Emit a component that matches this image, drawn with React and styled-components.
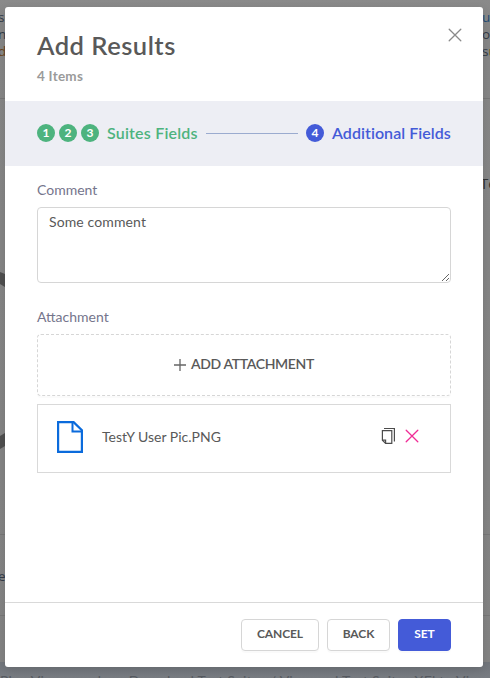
import React from 'react';
import styled, { createGlobalStyle } from 'styled-components';

const GlobalStyle = createGlobalStyle`
  * { box-sizing: border-box; }
  body {
    margin: 0;
    overflow: hidden;
    background: #868686;
    font-family: Lato, "Liberation Sans", sans-serif;
    color: #595959;
  }
`;

const Screen = styled.div`
  position: relative;
  width: 490px;
  height: 678px;
  overflow: hidden;
`;

const Page = styled.div`
  display: flex;
  flex-direction: column;
  height: 678px;
  background: linear-gradient(#8a8a8a, #868686 30px, #838383);
`;

const PageSection = styled.div`
  display: flex;
  flex-shrink: 0;
  justify-content: space-between;
  height: ${(p) => p.$height}px;
  padding-top: ${(p) => p.$top || 0}px;
  border-bottom: 1px solid #777;
  font: 13.5px/17px "Open Sans", sans-serif;
  color: #333b48;
`;

const Snippets = styled.div`
  width: 8px;
  margin-left: ${(p) => p.$shift || 0}px;
  white-space: nowrap;
`;

const Tint = styled.span`
  color: ${(p) => p.$color};
`;

const SideText = styled.div`
  position: absolute;
  left: ${(p) => p.$x}px;
  top: ${(p) => p.$y}px;
  font: 15px/20px "Open Sans", sans-serif;
  color: #333;
`;

const Arc = styled.svg`
  position: absolute;
  left: 0;
  top: 268px;
`;

const PageFooter = styled.div`
  flex: 1;
  background: linear-gradient(#71757b, #7d8187);
  margin-top: 46px;
  padding: 10px 0 0;
  font-size: 14px;
  line-height: 18px;
  letter-spacing: 0.25px;
  white-space: nowrap;
  color: #565a60;
`;

const Modal = styled.section`
  position: absolute;
  left: 5px;
  top: 7px;
  width: 478px;
  height: 660px;
  display: flex;
  flex-direction: column;
  overflow: hidden;
  background: #fff;
  border-radius: 3px;
`;

const Shadow = styled.div`
  position: absolute;
  left: 5px;
  top: 7px;
  width: 478px;
  height: 660px;
  border-radius: 3px;
  box-shadow: 0 3px 10px rgba(0, 0, 0, 0.12);
`;

const Header = styled.header`
  display: flex;
  justify-content: space-between;
  height: 94px;
  padding: 21px 21px 0 32px;
`;

const Title = styled.h1`
  margin: 1px 0 0;
  font-size: 25.5px;
  font-weight: 600;
  line-height: 32px;
  letter-spacing: 0.5px;
`;

const Subtitle = styled.div`
  margin-top: 5px;
  font-size: 13.5px;
  font-weight: 700;
  line-height: 20px;
  letter-spacing: 0.25px;
  color: #9a9a9a;
`;

const IconButton = styled.button`
  display: block;
  height: ${(p) => p.$size}px;
  padding: 0;
  border: 0;
  background: none;
`;

const Steps = styled.nav`
  display: flex;
  align-items: center;
  height: 65px;
  padding: 0 32px 1px;
  background: #edeef4;
`;

const Step = styled.div`
  display: flex;
  align-items: center;
  gap: 4px;
  color: ${(p) => p.$color};
`;

const StepNumber = styled.span`
  width: 18px;
  height: 18px;
  border-radius: 50%;
  background: ${(p) => p.$color};
  color: #fff;
  font-size: 12px;
  font-weight: 700;
  line-height: 18px;
  text-align: center;
`;

const StepName = styled.span`
  width: ${(p) => p.$width}px;
  margin-left: 4px;
  padding-bottom: 1px;
  font-size: 16px;
  font-weight: 600;
  line-height: 20px;
  letter-spacing: ${(p) => p.$spacing}px;
  white-space: nowrap;
`;

const StepLine = styled.div`
  flex: 1;
  height: 1px;
  margin: 1px 8px 0;
  background: #9babcf;
`;

const Body = styled.main`
  flex: 1;
  padding: 14px 32px 0;
`;

const Label = styled.label`
  display: block;
  height: 27px;
  font-size: 14px;
  line-height: 20px;
  color: #75758c;
`;

const TextArea = styled.textarea`
  display: block;
  width: 414px;
  height: 76px;
  margin-bottom: 24px;
  padding: 3px 11px 4px;
  border: 1px solid #d6d6d6;
  border-radius: 4px;
  outline: 0;
  resize: vertical;
  font: 400 14px/22px Lato, sans-serif;
  letter-spacing: 0.12px;
  color: #595959;
`;

const AddButton = styled.button`
  display: flex;
  align-items: center;
  justify-content: center;
  gap: 4px;
  width: 414px;
  height: 62px;
  padding: 0 1px 1px 0;
  border: 1px dashed #d6d6d6;
  border-radius: 4px;
  background: #fff;
  box-shadow: 0 2px 0 rgba(0, 0, 0, 0.016);
  font: 600 14px/20px Lato, sans-serif;
  letter-spacing: -0.36px;
  color: #595959;
`;

const AddText = styled.span`
  padding-bottom: 1px;
`;

const FileCard = styled.div`
  display: flex;
  align-items: center;
  height: 69px;
  margin-top: 8px;
  padding: 0 31px 3px 16px;
  border: 1px solid #d9d9d9;
`;

const FileName = styled.span`
  flex: 1;
  margin-left: 16px;
  font-size: 14px;
  line-height: 20px;
`;

const FileActions = styled.div`
  display: flex;
  align-items: center;
  gap: 9px;
  padding-bottom: 2px;
`;

const Footer = styled.footer`
  display: flex;
  justify-content: flex-end;
  gap: 8px;
  height: 65px;
  padding: 16px 32px;
  border-top: 1px solid #d9d9d9;
`;

const Button = styled.button`
  width: ${(p) => p.$width}px;
  height: 32px;
  padding: 0 0 2px;
  border: 1px solid ${(p) => (p.$primary ? '#445bd8' : '#d6d6d6')};
  border-radius: 4px;
  background: ${(p) => (p.$primary ? '#445bd8' : '#fff')};
  box-shadow: 0 2px 0 rgba(0, 0, 0, 0.02);
  font: 700 12px/20px Lato, sans-serif;
  letter-spacing: -0.1px;
  color: ${(p) => (p.$primary ? '#fff' : '#595959')};
`;

const GREEN = '#4db37e';
const BLUE = '#445bd8';

const CrossIcon = ({ size, color, inset, strokeWidth }) => (
  <svg display="block" width={size} height={size} viewBox={`0 0 ${size} ${size}`} fill="none" stroke={color} strokeWidth={strokeWidth} strokeLinecap="round">
    <path d={`M${inset} ${inset}L${size - inset} ${size - inset}M${size - inset} ${inset}L${inset} ${size - inset}`} />
  </svg>
);

const PlusIcon = () => (
  <svg width="14" height="14" viewBox="0 0 14 14" stroke="#666" strokeWidth="1.3">
    <path d="M7 1v12M1 7h12" />
  </svg>
);

const FileIcon = () => (
  <svg width="32" height="34" viewBox="0 0 32 34" fill="none" stroke="#0b6bdc" strokeWidth="2.2">
    <path d="M4.1 2.1H19.6L27.9 10.1V31.9H4.1Z" />
    <path d="M18.5 2V11.5H28" strokeWidth="2" />
  </svg>
);

const CopyIcon = () => (
  <svg display="block" width="16" height="18" viewBox="0 0 16 18" fill="none" stroke="#4c4c4c" strokeWidth="1.2">
    <path d="M4 1.5H14.4V14.6" />
    <path d="M2.4 3.7H11.8V16.4H5.6L2.4 13.2Z" />
    <path d="M2.4 13.2H5.6V16.4" />
  </svg>
);

const Background = () => (
  <Page>
    <PageSection $height={99} $top={9}>
      <Snippets $shift={-2}>sc<br />n<br /><Tint $color="#69451f">d</Tint><Tint $color="#254a72">a</Tint></Snippets>
      <Snippets><Tint $color="#244c76">u</Tint><Tint $color="#805018">s</Tint><br />o<Tint $color="#432b63">l</Tint><br />s<Tint $color="#76501e">u</Tint></Snippets>
    </PageSection>
    <PageSection $height={436} />
    <PageSection $height={81} $top={33}>
      <Snippets $shift={-2}>e</Snippets>
    </PageSection>
    <PageFooter>Plan View members Download Test Suites / View and Test Suites XEl to View</PageFooter>
  </Page>
);

export default function App() {
  return (
    <>
      <GlobalStyle />
      <Screen>
        <Background />
        <SideText $x={480} $y={173}>Te</SideText>
        <Arc width="5" height="190" viewBox="0 0 5 190" fill="#4f4f4f">
          <path d="M0 4L5 6V19L0 16Z" />
          <path d="M0 168L5 165V178L0 181Z" />
        </Arc>
        <Shadow />
        <Modal>
          <Header>
            <div>
              <Title>Add Results</Title>
              <Subtitle>4 Items</Subtitle>
            </div>
            <IconButton $size={14} aria-label="Close">
              <CrossIcon size={14} color="#8a8a8a" inset={1.2} strokeWidth={1.3} />
            </IconButton>
          </Header>
          <Steps>
            <Step $color={GREEN}>
              {[1, 2, 3].map((n) => (
                <StepNumber key={n} $color={GREEN}>{n}</StepNumber>
              ))}
              <StepName $width={91} $spacing={0.2}>Suites Fields</StepName>
            </Step>
            <StepLine />
            <Step $color={BLUE}>
              <StepNumber $color={BLUE}>4</StepNumber>
              <StepName $width={119} $spacing={0.05}>Additional Fields</StepName>
            </Step>
          </Steps>
          <Body>
            <Label>Comment</Label>
            <TextArea defaultValue="Some comment" spellCheck={false} />
            <Label>Attachment</Label>
            <AddButton><PlusIcon /><AddText>ADD ATTACHMENT</AddText></AddButton>
            <FileCard>
              <FileIcon />
              <FileName>TestY User Pic.PNG</FileName>
              <FileActions>
                <IconButton $size={18} aria-label="Copy"><CopyIcon /></IconButton>
                <IconButton $size={14} aria-label="Remove">
                  <CrossIcon size={14} color="#f02c96" inset={1.2} strokeWidth={1.3} />
                </IconButton>
              </FileActions>
            </FileCard>
          </Body>
          <Footer>
            <Button $width={78}>CANCEL</Button>
            <Button $width={63}>BACK</Button>
            <Button $width={53} $primary>SET</Button>
          </Footer>
        </Modal>
      </Screen>
    </>
  );
}
